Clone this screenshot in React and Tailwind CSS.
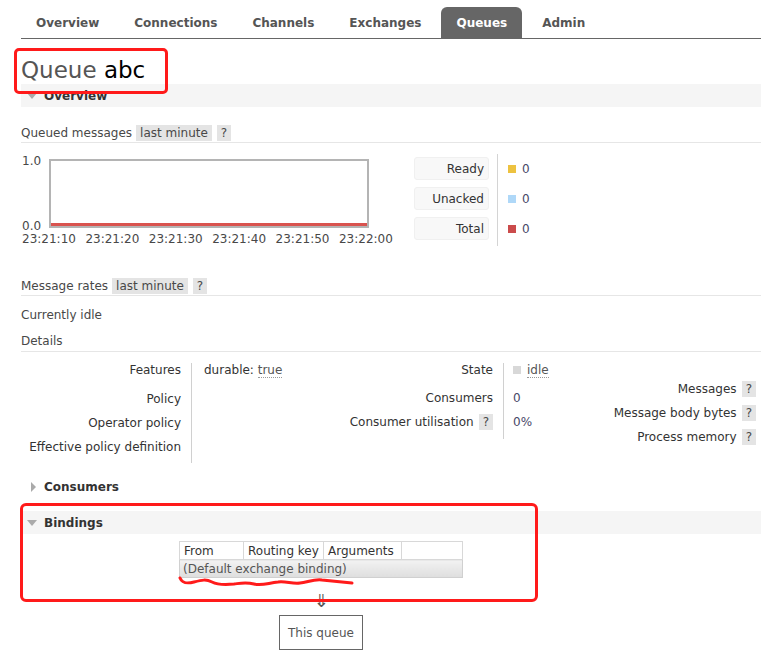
import React from 'react'

const tabs = ['Overview', 'Connections', 'Channels', 'Exchanges', 'Queues', 'Admin']
const times = ['23:21:10', '23:21:20', '23:21:30', '23:21:40', '23:21:50', '23:22:00']

function Badge({ children, className = '' }) {
  return (
    <span className={`inline-flex h-[16px] items-center bg-[#e4e4e4] px-[4px] text-[#484848] ${className}`}>
      {children}
    </span>
  )
}

function SectionHeader({ title, open = true, shaded = true }) {
  return (
    <div className={`flex h-[23px] items-center ${shaded ? 'bg-[#f5f5f5]' : ''}`}>
      {open ? (
        <span className="ml-[6px] mr-[7px] h-0 w-0 border-x-[5px] border-t-[6px] border-x-transparent border-t-[#aaa]" />
      ) : (
        <span className="ml-[10px] mr-[8px] h-0 w-0 border-y-[5px] border-l-[5px] border-y-transparent border-l-[#aaa]" />
      )}
      <span className="font-bold text-[#333]">{title}</span>
    </div>
  )
}

function RangeRow({ label }) {
  return (
    <div className="flex h-[19px] items-start border-b border-[#e6e6e6] pt-[1px]">
      <span className="mr-[4px] leading-[16px]">{label}</span>
      <Badge>last minute</Badge>
      <Badge className="ml-[5px]">?</Badge>
    </div>
  )
}

function Chart() {
  return (
    <div className="relative h-[96px] w-[393px]">
      <span className="absolute left-[1px] top-[4px] leading-[14px]">1.0</span>
      <div className="absolute left-[28px] top-[9px] h-[69px] w-[320px] border-2 border-[#b4b4b4] bg-white">
        <div className="absolute bottom-0 left-0 right-0 h-[3px] bg-[#d9534f]" />
      </div>
      <span className="absolute left-[1px] top-[69px] leading-[14px]">0.0</span>
      <div className="absolute left-[1px] top-[82px] flex leading-[14px]">
        {times.map(t => (
          <span key={t} className="w-[63.4px]">{t}</span>
        ))}
      </div>
    </div>
  )
}

function Legend() {
  const rows = [
    ['Ready', 'bg-[#edc240]'],
    ['Unacked', 'bg-[#afd8f8]'],
    ['Total', 'bg-[#cb4b4b]'],
  ]
  return (
    <div className="flex pt-[4px]">
      <div className="flex w-[84px] flex-col gap-[7px] border-r border-[#d4d4d4] pb-[3px] pt-[3px]">
        {rows.map(([l]) => (
          <div key={l} className="flex h-[23px] w-[75px] items-center justify-end rounded-[3px] border border-[#f0f0f0] bg-[#f8f8f8] pr-[4px] text-[#333]">
            {l}
          </div>
        ))}
      </div>
      <div className="flex flex-col gap-[7px] pt-[3px]">
        {rows.map(([l, c]) => (
          <div key={l} className="flex h-[23px] items-center pl-[10px]">
            <span className={`mr-[6px] h-[8px] w-[8px] ${c}`} />
            <span className="text-[#484868]">0</span>
          </div>
        ))}
      </div>
    </div>
  )
}

function Details() {
  return (
    <div className="flex pt-[11px] text-[#333]">
      {/* first column */}
      <div className="flex">
        <div className="flex w-[171px] flex-col items-end border-r border-[#d0d0d0] pr-[10px]">
          <div className="h-[29px] leading-[14px]">Features</div>
          <div className="h-[24px] leading-[14px]">Policy</div>
          <div className="h-[24px] leading-[14px]">Operator policy</div>
          <div className="h-[23px] leading-[14px]">Effective policy definition</div>
        </div>
        <div className="w-[149px] pl-[12px] leading-[14px]">
          durable: <span className="border-b border-dotted border-[#999] text-[#555]">true</span>
        </div>
      </div>
      {/* second column */}
      <div className="flex self-start">
        <div className="flex w-[163px] flex-col items-end border-r border-[#d0d0d0] pr-[10px]">
          <div className="h-[28px] leading-[14px]">State</div>
          <div className="h-[24px] leading-[14px]">Consumers</div>
          <div className="flex h-[24px] items-start leading-[14px]">
            Consumer utilisation
            <Badge className="-mt-[1px] ml-[5px]">?</Badge>
          </div>
        </div>
        <div className="flex flex-col pl-[9px]">
          <div className="flex h-[28px] items-start leading-[14px]">
            <span className="mr-[6px] mt-[3px] h-[8px] w-[8px] bg-[#d8d8d8]" />
            <span className="border-b border-dotted border-[#999] text-[#555]">idle</span>
          </div>
          <div className="h-[24px] leading-[14px] text-[#484868]">0</div>
          <div className="h-[24px] leading-[14px] text-[#484868]">0%</div>
        </div>
      </div>
      {/* third column */}
      <div className="ml-auto mr-[5px] flex flex-col items-end pt-[19px]">
        {['Messages', 'Message body bytes', 'Process memory'].map(l => (
          <div key={l} className="flex h-[24px] items-start leading-[14px]">
            {l}
            <Badge className="-mt-[1px] ml-[5px]">?</Badge>
          </div>
        ))}
      </div>
    </div>
  )
}

function Bindings() {
  return (
    <div className="ml-[158px] flex w-[284px] flex-col items-center pt-[7px]">
      <table className="w-[284px] border-collapse text-left text-[#333]">
        <thead>
          <tr className="h-[18px]">
            <th className="w-[64px] border border-[#d8d8d8] pl-[4px] font-normal leading-[14px]">From</th>
            <th className="w-[80px] border border-[#d8d8d8] pl-[4px] font-normal leading-[14px]">Routing key</th>
            <th className="w-[78px] border border-[#d8d8d8] pl-[4px] font-normal leading-[14px]">Arguments</th>
            <th className="border border-[#d8d8d8]" />
          </tr>
        </thead>
        <tbody>
          <tr className="h-[18px]">
            <td colSpan={4} className="border border-[#d0d0d0] bg-gradient-to-b from-[#f2f2f2] to-[#dedede] pl-[3px] leading-[14px] text-[#555]">
              (Default exchange binding)
            </td>
          </tr>
        </tbody>
      </table>
      <div className="mt-[15px] text-[18px] leading-[16px] text-[#555]">⇓</div>
      <div className="mt-[6px] flex h-[35px] w-[84px] items-center justify-center border border-[#666] text-[#555]">
        This queue
      </div>
    </div>
  )
}

export default function App() {
  return (
    <div className="relative min-h-[671px] w-[761px] overflow-hidden bg-white pl-[21px] text-[12px] text-[#484848]" style={{ fontFamily: '"DejaVu Sans", Verdana, sans-serif' }}>
      {/* Tabs */}
      <div className="flex h-[39px] items-end border-b border-[#666] pt-[7px]">
        {tabs.map(t => (
          <div
            key={t}
            className={`mr-[5px] flex h-[31px] items-center rounded-t-[6px] px-[15px] font-bold ${
              t === 'Queues' ? 'bg-[#666] text-white' : 'text-[#555]'
            }`}
          >
            {t}
          </div>
        ))}
      </div>

      <h1 className="mt-[17px] text-[23px] font-normal leading-[28px]">
        <span className="text-[#555]">Queue</span> <span className="text-black">abc</span>
      </h1>

      <SectionHeader title="Overview" />

      <div className="mt-[17px]">
        <RangeRow label="Queued messages" />
      </div>

      <div className="mt-[7px] flex">
        <Chart />
        <Legend />
      </div>

      <div className="mt-[31px]">
        <RangeRow label="Message rates" />
      </div>

      <div className="mt-[12px] leading-[14px]">Currently idle</div>

      <div className="mt-[12px] h-[18px] border-b border-[#e6e6e6] leading-[14px]">Details</div>

      <Details />

      <div className="mt-[12px]">
        <SectionHeader title="Consumers" open={false} shaded={false} />
      </div>
      <div className="mt-[13px]">
        <SectionHeader title="Bindings" />
      </div>

      <Bindings />

      {/* red annotations */}
      <div className="pointer-events-none absolute left-[14px] top-[48px] h-[46px] w-[154px] rounded-[5px] border-[3px] border-[#ff1a1a]" />
      <div className="pointer-events-none absolute left-[20px] top-[503px] h-[99px] w-[518px] rounded-[6px] border-[3px] border-[#ff1a1a]" />
      <svg className="pointer-events-none absolute left-[176px] top-[575px]" width="182" height="18" viewBox="0 0 182 18">
        <path
          d="M4 3 C6 8 10 9 18 7 C26 5 30 4 36 7 C42 10 48 10 58 9 C66 8 70 7 78 9 C86 11 92 8 102 7 C110 6 116 9 124 8 C132 7 138 4 146 5 C156 6 166 7 176 8"
          fill="none"
          stroke="#ff1a1a"
          strokeWidth="3"
          strokeLinecap="round"
        />
      </svg>
    </div>
  )
}
